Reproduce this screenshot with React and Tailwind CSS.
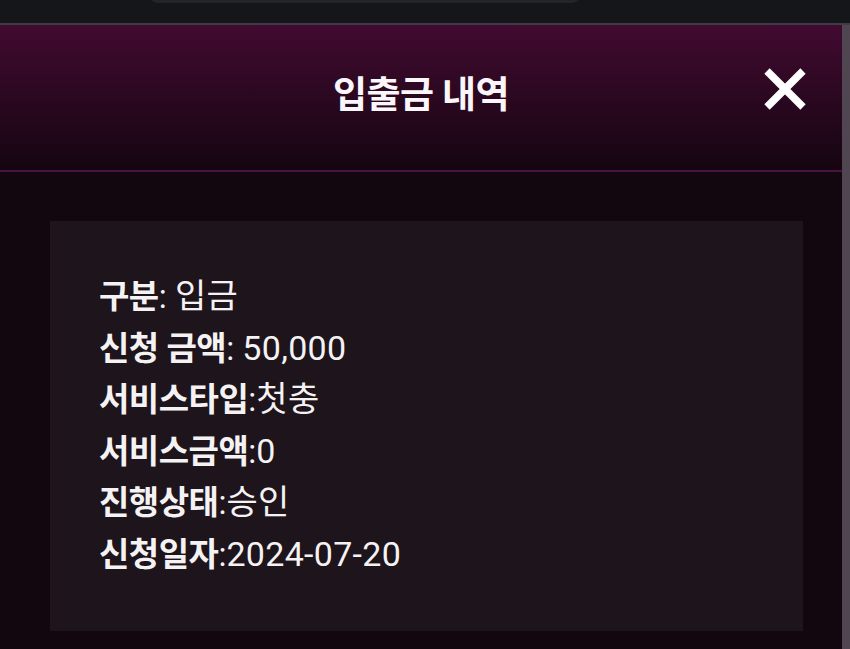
import React from 'react';

const rows = [
  { label: '구분', sep: ': ', value: '입금' },
  { label: '신청 금액', sep: ': ', value: '50,000' },
  { label: '서비스타입', sep: ':', value: '첫충' },
  { label: '서비스금액', sep: ':', value: '0' },
  { label: '진행상태', sep: ':', value: '승인' },
  { label: '신청일자', sep: ':', value: '2024-07-20' },
];

const CloseIcon = () => (
  <svg width="44" height="44" viewBox="0 0 44 44" fill="none">
    <path d="M4 4 L40 40 M40 4 L4 40" stroke="#ffffff" strokeWidth="7.5" strokeLinecap="butt" />
  </svg>
);

const App = () => {
  return (
    <div
      className="w-[850px] h-[649px] overflow-hidden bg-[#12070f] text-white flex flex-col"
      style={{ fontFamily: 'Roboto, "Noto Sans CJK KR", sans-serif' }}
    >
      {/* browser strip */}
      <div className="h-[23px] shrink-0 bg-[#141619] relative">
        <div className="absolute left-[148px] top-[-20px] w-[434px] h-[23px] rounded-b-[10px] bg-[#23252b]" />
      </div>
      <div className="h-[2px] shrink-0 bg-[#3f3d44]" />

      <div className="flex flex-1 min-h-0">
        <div className="flex-1 flex flex-col min-w-0">
          {/* header */}
          <div className="h-[145px] shrink-0 bg-gradient-to-b from-[#420a31] to-[#150510] flex items-center relative">
            <h1 className="w-full text-center text-[37px] font-bold tracking-[-0.6px] text-[#fbf6fa] mt-[-4px]">
              입출금 내역
            </h1>
            <button className="absolute right-[35px] top-[42px]">
              <CloseIcon />
            </button>
          </div>
          <div className="h-[2px] shrink-0 bg-[#4b1242]" />

          {/* body */}
          <div className="flex-1 pt-[49px] pl-[50px] pr-[39px] bg-[#12070f]">
            <div className="h-[410px] bg-[#1e141b] pt-[50px] pl-[49px]">
              {rows.map((r) => (
                <div key={r.label} className="text-[33px] leading-[51.6px] text-[#f5f2f4] whitespace-nowrap">
                  <span className="font-bold tracking-[-0.5px]">{r.label}</span>
                  <span>{r.sep}</span>
                  <span className="text-[34px] tracking-[0.3px]">{r.value}</span>
                </div>
              ))}
            </div>
          </div>
        </div>
        {/* scrollbar */}
        <div className="w-[8px] shrink-0 bg-[#4f4651]" />
      </div>
    </div>
  );
};

export default App;
